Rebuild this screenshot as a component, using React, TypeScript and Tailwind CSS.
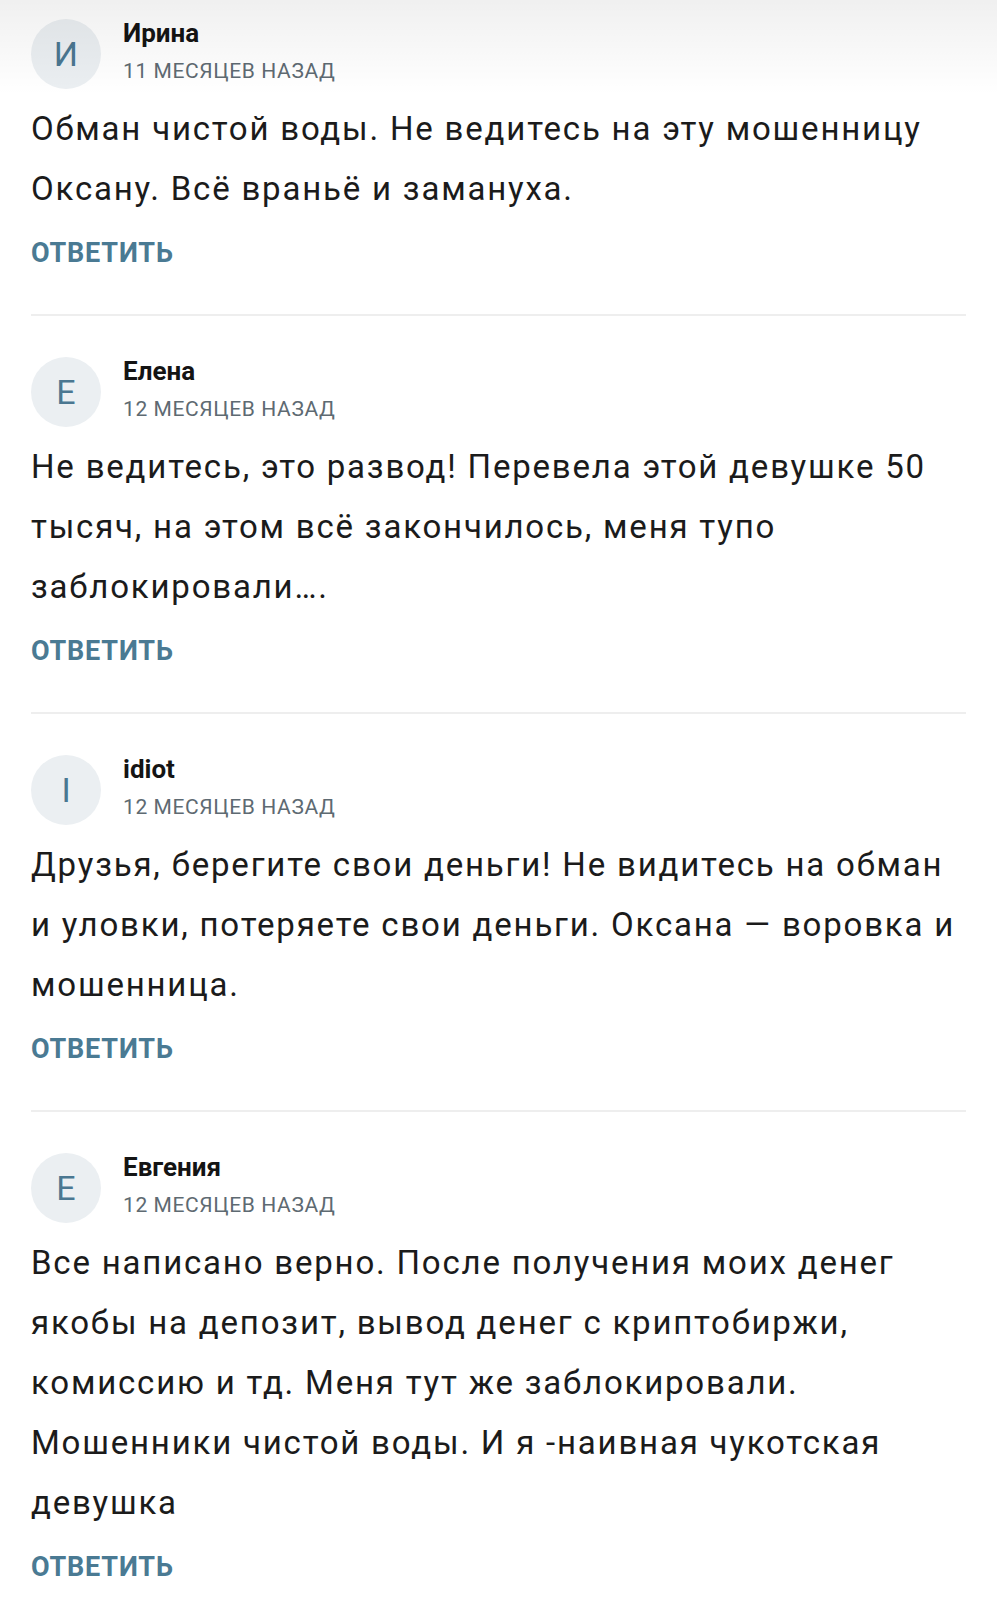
type Comment = {
  initial: string;
  name: string;
  date: string;
  text: string;
};

const comments: Comment[] = [
  {
    initial: "И",
    name: "Ирина",
    date: "11 месяцев назад",
    text: "Обман чистой воды. Не ведитесь на эту мошенницу Оксану. Всё враньё и замануха.",
  },
  {
    initial: "Е",
    name: "Елена",
    date: "12 месяцев назад",
    text: "Не ведитесь, это развод! Перевела этой девушке 50 тысяч, на этом всё закончилось, меня тупо заблокировали….",
  },
  {
    initial: "I",
    name: "idiot",
    date: "12 месяцев назад",
    text: "Друзья, берегите свои деньги! Не видитесь на обман и уловки, потеряете свои деньги. Оксана — воровка и мошенница.",
  },
  {
    initial: "Е",
    name: "Евгения",
    date: "12 месяцев назад",
    text: "Все написано верно. После получения моих денег якобы на депозит, вывод денег с криптобиржи, комиссию и тд. Меня тут же заблокировали. Мошенники чистой воды. И я -наивная чукотская девушка",
  },
];

const CommentItem = ({ c, first }: { c: Comment; first: boolean }) => (
  <div
    className={
      first
        ? "pt-[19px] pb-[45px]"
        : "pt-[41px] pb-[45px] border-t-2 border-[#eeeeee]"
    }
  >
    {/* header */}
    <div className="flex items-center gap-[22px] h-[70px]">
      <div className="w-[70px] h-[70px] rounded-full bg-[#ebeff2] flex items-center justify-center text-[34px] text-[#4a7791] leading-none shrink-0">
        {c.initial}
      </div>
      <div className="flex flex-col">
        <div className="text-[26px] font-bold text-[#141414] leading-[32px] -mt-[6px]">
          {c.name}
        </div>
        <div className="text-[21px] uppercase tracking-[0.6px] text-[#5e6a72] leading-[28px] mt-[8px]">
          {c.date}
        </div>
      </div>
    </div>

    {/* body */}
    <p className="mt-[10px] pr-[6px] text-[33px] tracking-[1.8px] leading-[60px] text-[#1b1b1b]">
      {c.text}
    </p>

    {/* reply */}
    <div className="mt-[18px] text-[27px] font-bold uppercase tracking-[0.8px] text-[#4a7a93] leading-[32px]">
      Ответить
    </div>
  </div>
);

export default function App() {
  return (
    <div
      className="relative w-[997px] h-[1600px] bg-white overflow-hidden"
      style={{ fontFamily: "Roboto, 'Noto Sans', sans-serif" }}
    >
      {/* top shadow from header bar */}
      <div className="pointer-events-none absolute inset-x-0 top-0 h-[95px] bg-gradient-to-b from-black/[0.06] to-transparent" />

      <div className="px-[31px]">
        {comments.map((c, i) => (
          <CommentItem key={i} c={c} first={i === 0} />
        ))}
      </div>
    </div>
  );
}
